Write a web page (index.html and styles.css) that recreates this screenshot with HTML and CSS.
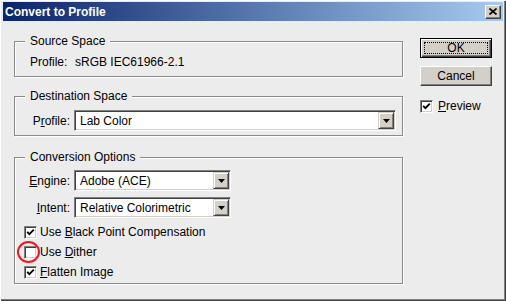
FILE: index.html
```html
<!DOCTYPE html>
<html lang="en">
<head>
    <meta charset="UTF-8">
    <title>Convert to Profile</title>
    <link rel="stylesheet" href="styles.css">
</head>
<body>
    <div class="dialog">
        <div class="titlebar">
            <span class="title">Convert to Profile</span>
            <span class="close-btn">
                <svg width="8" height="7" viewBox="0 0 8 7"><path d="M0.5 0.5 L7.5 6.5 M7.5 0.5 L0.5 6.5" stroke="#000" stroke-width="1.6"/></svg>
            </span>
        </div>

        <div class="content">
            <div class="groups">
                <fieldset class="group group-source">
                    <legend>Source Space</legend>
                    <div class="text-row"><span class="text-label">Profile:</span>sRGB IEC61966-2.1</div>
                </fieldset>

                <fieldset class="group group-dest">
                    <legend>Destination Space</legend>
                    <div class="field">
                        <span class="field-label">P<u>r</u>ofile:</span>
                        <div class="select select-wide">
                            <span class="select-value">Lab Color</span>
                            <span class="select-arrow"><svg width="7" height="4" viewBox="0 0 7 4"><path d="M0 0 H7 L3.5 4 Z" fill="#000"/></svg></span>
                        </div>
                    </div>
                </fieldset>

                <fieldset class="group group-options">
                    <legend>Conversion Options</legend>
                    <div class="field">
                        <span class="field-label"><u>E</u>ngine:</span>
                        <div class="select">
                            <span class="select-value">Adobe (ACE)</span>
                            <span class="select-arrow"><svg width="7" height="4" viewBox="0 0 7 4"><path d="M0 0 H7 L3.5 4 Z" fill="#000"/></svg></span>
                        </div>
                    </div>
                    <div class="field field-next">
                        <span class="field-label"><u>I</u>ntent:</span>
                        <div class="select">
                            <span class="select-value">Relative Colorimetric</span>
                            <span class="select-arrow"><svg width="7" height="4" viewBox="0 0 7 4"><path d="M0 0 H7 L3.5 4 Z" fill="#000"/></svg></span>
                        </div>
                    </div>

                    <div class="checks">
                        <label class="check">
                            <span class="box"><svg width="9" height="9" viewBox="0 0 9 9"><path d="M1.2 3.8 L3.4 6.2 L7.8 1.6" fill="none" stroke="#000" stroke-width="1.8"/></svg></span>
                            <span>Use <u>B</u>lack Point Compensation</span>
                        </label>
                        <label class="check">
                            <span class="box"></span>
                            <span>Use <u>D</u>ither</span>
                            <span class="highlight"></span>
                        </label>
                        <label class="check">
                            <span class="box"><svg width="9" height="9" viewBox="0 0 9 9"><path d="M1.2 3.8 L3.4 6.2 L7.8 1.6" fill="none" stroke="#000" stroke-width="1.8"/></svg></span>
                            <span><u>F</u>latten Image</span>
                        </label>
                    </div>
                </fieldset>
            </div>

            <div class="actions">
                <div class="btn btn-default"><span class="focus-rect">OK</span></div>
                <div class="btn">Cancel</div>
                <label class="check check-preview">
                    <span class="box"><svg width="9" height="9" viewBox="0 0 9 9"><path d="M1.2 3.8 L3.4 6.2 L7.8 1.6" fill="none" stroke="#000" stroke-width="1.8"/></svg></span>
                    <span><u>P</u>review</span>
                </label>
            </div>
        </div>
    </div>
</body>
</html>
```

FILE: styles.css
```css
* {
    margin: 0;
    padding: 0;
    box-sizing: border-box;
}

body {
    background: #ececec;
    font-family: "Liberation Sans", Arial, sans-serif;
    font-size: 12px;
    color: #000;
}

.dialog {
    width: 506px;
    height: 301px;
    background: #ececec;
    box-shadow: inset 1px 1px #fff, inset -1px -1px #404040, inset -2px -2px #808080;
    display: flex;
    flex-direction: column;
}

.titlebar {
    margin: 2px 3px 0;
    height: 19px;
    background: linear-gradient(to right, #0a246a, #a6caf0);
    display: flex;
    align-items: center;
    justify-content: space-between;
    padding: 0 2px 0 2px;
}

.title {
    color: #fff;
    font-weight: bold;
    font-size: 12px;
}

.close-btn {
    width: 16px;
    height: 14px;
    background: #d4d0c8;
    border: 1px solid;
    border-color: #fff #404040 #404040 #fff;
    box-shadow: inset -1px -1px #808080;
    display: flex;
    align-items: center;
    justify-content: center;
}

.content {
    display: flex;
    padding: 13px 0 0 14px;
}

.groups {
    width: 389px;
    display: flex;
    flex-direction: column;
}

/* group boxes */
.group {
    border: 1px solid #8a8a8a;
    box-shadow: inset 1px 1px #fff, 1px 1px #fff;
    padding: 7px 0 7px 0;
}

.group legend {
    margin-left: 10px;
    padding: 0 5px;
    line-height: 14px;
    background: #ececec;
}

.group-dest {
    margin-top: 12px;
    padding: 7px 0 4px 0;
}

.group-options {
    margin-top: 14px;
    padding: 6px 0 1px 0;
}

.text-row {
    line-height: 14px;
    padding-left: 15px;
}

.text-label {
    display: inline-block;
    width: 45px;
}

.field {
    display: flex;
    align-items: center;
    padding-left: 2px;
}

.field-next {
    margin-top: 6px;
}

.field-label {
    width: 53px;
    text-align: right;
    margin-right: 4px;
}

/* combo boxes */
.select {
    width: 157px;
    height: 21px;
    background: #fff;
    border: 1px solid;
    border-color: #808080 #fff #fff #808080;
    box-shadow: inset 1px 1px #404040, inset -1px -1px #d4d0c8;
    display: flex;
    align-items: center;
    padding: 1px;
}

.select-wide {
    width: 322px;
}

.select-value {
    padding-left: 4px;
    flex: 1;
}

.select-arrow {
    width: 16px;
    height: 17px;
    background: #d4d0c8;
    border: 1px solid;
    border-color: #d4d0c8 #404040 #404040 #d4d0c8;
    box-shadow: inset 1px 1px #fff, inset -1px -1px #808080;
    display: flex;
    align-items: center;
    justify-content: center;
}

/* checkboxes */
.checks {
    margin-top: 4px;
}

.check {
    display: flex;
    align-items: center;
    height: 20px;
    padding-left: 9px;
    position: relative;
}

.box {
    width: 13px;
    height: 13px;
    margin-right: 3px;
    background: #fff;
    border: 1px solid;
    border-color: #808080 #fff #fff #808080;
    box-shadow: inset 1px 1px #404040, inset -1px -1px #d4d0c8;
    display: flex;
    align-items: center;
    justify-content: center;
}

.highlight {
    position: absolute;
    left: 2px;
    top: -1px;
    width: 23px;
    height: 22px;
    border: 2px solid #f01820;
    border-radius: 50%;
}

/* buttons */
.actions {
    margin-left: 17px;
    padding-top: 4px;
    width: 72px;
}

.btn {
    width: 72px;
    height: 20px;
    background: #d4d0c8;
    border: 1px solid;
    border-color: #fff #404040 #404040 #fff;
    box-shadow: inset -1px -1px #808080;
    display: flex;
    align-items: center;
    justify-content: center;
    margin-top: 8px;
}

.btn-default {
    margin-top: 0;
    border: 1px solid #000;
    box-shadow: inset 1px 1px #fff, inset -1px -1px #404040, inset -2px -2px #808080;
    padding: 3px;
}

.focus-rect {
    width: 100%;
    height: 100%;
    border: 1px dotted #000;
    display: flex;
    align-items: center;
    justify-content: center;
}

.check-preview {
    padding-left: 0;
    margin-top: 10px;
}

.check-preview .box {
    margin-right: 5px;
}
```
